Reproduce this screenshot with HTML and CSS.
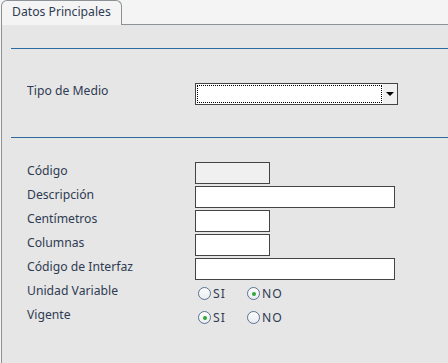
FILE: index.html
```html
<!DOCTYPE html>
<html lang="es">
<head>
  <meta charset="UTF-8" />
  <title>Datos Principales</title>
  <link rel="stylesheet" href="styles.css">
</head>
<body>
  <div class="tabbar">
    <div class="tab">Datos Principales</div>
    <div class="tab-rest"></div>
  </div>
  <div class="panel">
    <div class="sep first"></div>

    <div class="row tipo">
      <label>Tipo de Medio</label>
      <div class="select">
        <div class="select-value"></div>
        <div class="select-btn"><span class="arrow"></span></div>
      </div>
    </div>

    <div class="sep"></div>

    <div class="form">
      <label>Código</label>
      <div><input type="text" class="short" disabled /></div>

      <label>Descripción</label>
      <div><input type="text" class="long" /></div>

      <label>Centímetros</label>
      <div><input type="text" class="short" /></div>

      <label>Columnas</label>
      <div><input type="text" class="short" /></div>

      <label>Código de Interfaz</label>
      <div><input type="text" class="long" /></div>

      <label>Unidad Variable</label>
      <div class="radios">
        <span class="radio"></span><span class="opt">SI</span>
        <span class="radio on"></span><span class="opt">NO</span>
      </div>

      <label>Vigente</label>
      <div class="radios">
        <span class="radio on"></span><span class="opt">SI</span>
        <span class="radio"></span><span class="opt">NO</span>
      </div>
    </div>
  </div>
</body>
</html>
```

FILE: styles.css
```css
body {
  margin: 0;
  background: #f4f4f4;
  font-family: "Noto Sans", sans-serif;
  font-size: 12.2px;
  color: #2e3b52;
}
.tabbar {
  display: flex;
  padding-left: 1px;
  height: 25px;
}
.tab {
  width: 109px;
  height: 24px;
  padding-left: 10px;
  line-height: 22px;
  border: 1px solid #8c9196;
  border-bottom: none;
  border-radius: 6px 6px 0 0;
  background: #f4f4f4;
}
.tab-rest {
  flex: 1;
  border-bottom: 1px solid #8c9196;
}
.panel {
  margin-left: 1px;
  border-left: 1px solid #8c9196;
  background: #e6e6e6;
  height: 338px;
  padding-top: 23px;
  box-sizing: border-box;
}
.sep {
  margin: 34px 0 0 9px;
  border-top: 1px solid #2c6aa0;
}
.sep.first {
  margin-top: 0;
}
.row {
  display: flex;
  align-items: center;
}
.tipo {
  margin-top: 34px;
  padding-left: 25px;
  height: 22px;
  margin-bottom: -2px;
}
.tipo label {
  width: 168px;
  margin-top: -7px;
}
.select {
  display: flex;
  width: 201px;
  height: 20px;
  border: 1px solid #444;
  background: #fff;
}
.select-value {
  flex: 1;
  margin: 1px;
  border: 1px dotted #000;
}
.select-btn {
  width: 14px;
  background: #f0f0f0;
  display: flex;
  align-items: center;
  justify-content: center;
}
.arrow {
  width: 0;
  height: 0;
  border-left: 4px solid transparent;
  border-right: 4px solid transparent;
  border-top: 4px solid #000;
}
.form {
  display: grid;
  grid-template-columns: 168px 1fr;
  grid-auto-rows: 24px;
  margin-top: 24px;
  padding-left: 25px;
}
.form label {
  align-self: center;
  margin-top: -7px;
}
input {
  box-sizing: border-box;
  height: 22px;
  border: 1px solid #444;
  background: #fff;
  margin: 0;
  padding: 2px;
}
input:disabled {
  background: #f0f0f0;
}
input.short {
  width: 75px;
}
input.long {
  width: 200px;
}
.radios {
  display: flex;
  align-items: center;
  padding-left: 3px;
  margin-top: -1px;
}
.radio {
  box-sizing: border-box;
  width: 13px;
  height: 13px;
  border: 1px solid #5a7394;
  border-radius: 50%;
  background: linear-gradient(#fdfdfd, #e9ecef);
  position: relative;
}
.radio.on::after {
  content: "";
  position: absolute;
  left: 3.5px;
  top: 3.5px;
  width: 4px;
  height: 4px;
  border-radius: 50%;
  background: #2fa836;
}
.opt {
  margin-left: 2px;
  width: 34px;
  letter-spacing: 1px;
}
```
